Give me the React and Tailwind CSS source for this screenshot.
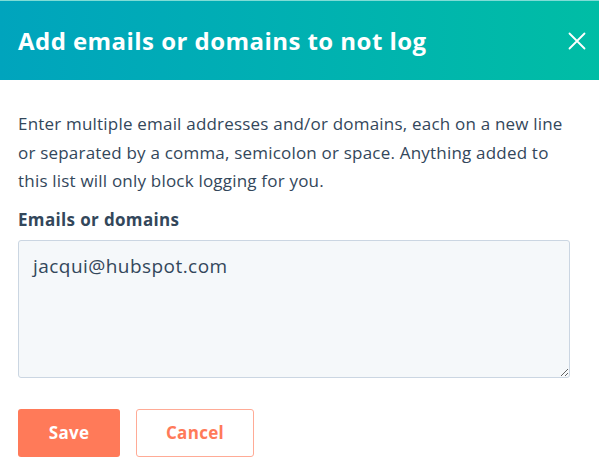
import React, { useState } from 'react';

const font = { fontFamily: '"Open Sans", Lato, sans-serif' };

export default function App() {
  const [value, setValue] = useState('jacqui@hubspot.com');

  return (
    <div className="w-[599px] h-[467px] bg-white overflow-hidden" style={font}>
      <div className="h-[80px] border-t border-[#7fdcd6] bg-gradient-to-r from-[#00a4bd] to-[#00bda5] flex items-center justify-between pl-[18px] pr-[10px]">
        <h1 className="text-[24px] font-bold text-white tracking-[0.45px]">Add emails or domains to not log</h1>
        <button className="w-[24px] h-[24px] flex items-center justify-center text-white">
          <svg width="18" height="18" viewBox="0 0 18 18" fill="none" stroke="currentColor" strokeWidth="1.8" strokeLinecap="round">
            <path d="M1.5 1.5 L16.5 16.5 M16.5 1.5 L1.5 16.5" />
          </svg>
        </button>
      </div>

      <div className="px-[18px] pt-[30px]">
        <p className="text-[17px] leading-[28.5px] tracking-[0.2px] text-[#33475b]">
          Enter multiple email addresses and/or domains, each on a new line or separated by a comma, semicolon or space. Anything added to this list will only block logging for you.
        </p>

        <label className="block mt-[12px] text-[17px] font-bold tracking-[0.35px] text-[#33475b] leading-[24px]">Emails or domains</label>

        <textarea
          value={value}
          onChange={(e) => setValue(e.target.value)}
          className="block mt-[8px] w-[552px] h-[138px] bg-[#f5f8fa] border border-[#cbd6e2] rounded-[3px] px-[14px] py-[11px] text-[19px] leading-[28px] tracking-[0.45px] text-[#33475b] outline-none"
          style={font}
        />

        <div className="flex gap-[16px] mt-[31px]">
          <button className="w-[102px] h-[48px] rounded-[3px] bg-[#ff7a59] text-white font-bold text-[17px] tracking-[0.3px]">Save</button>
          <button className="w-[118px] h-[48px] rounded-[3px] bg-white border border-[#ffab96] text-[#ff7a59] font-bold text-[17px] tracking-[0.3px]">Cancel</button>
        </div>
      </div>
    </div>
  );
}
